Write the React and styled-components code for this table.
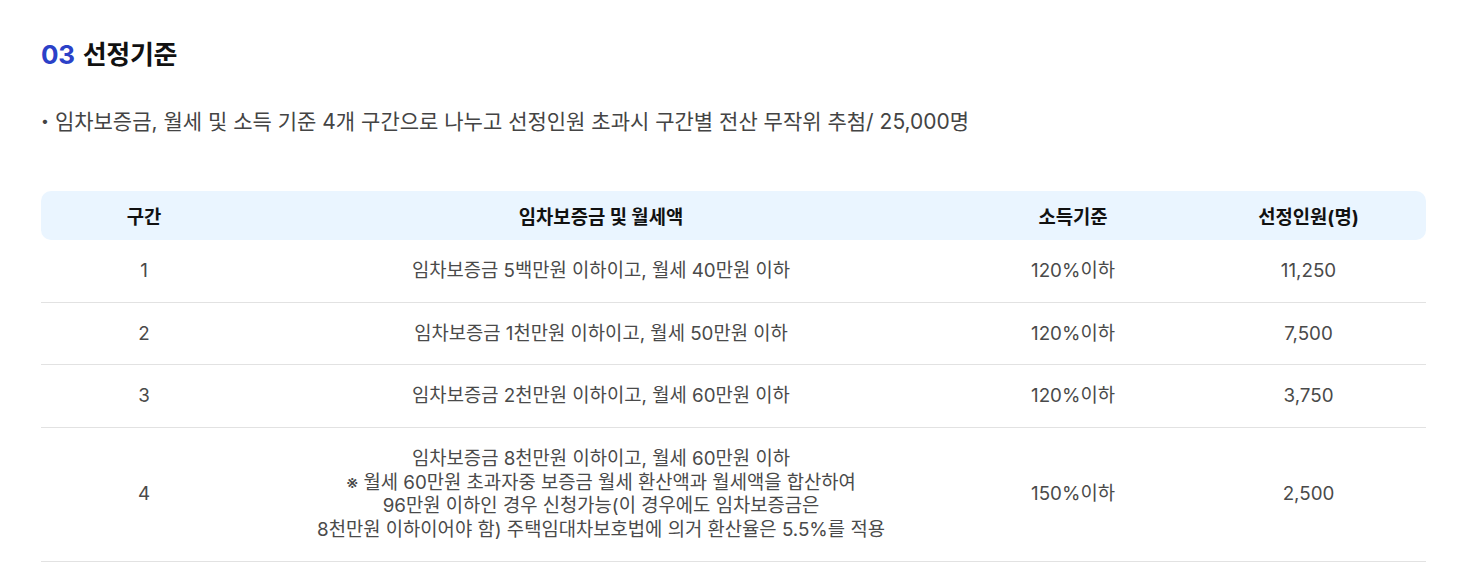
import React from 'react';
import styled, { createGlobalStyle } from 'styled-components';

const GlobalStyle = createGlobalStyle`
  body {
    margin: 0;
    background: #fff;
    font-family: Inter, "Noto Sans CJK KR", sans-serif;
  }
  * { box-sizing: border-box; }
`;

const Section = styled.section`
  padding: 36px 41px 0 41px;
`;

const Title = styled.h2`
  margin: 0;
  font-size: 26px;
  font-weight: 700;
  color: #111;
  line-height: 38px;
  letter-spacing: -0.3px;
  span {
    color: #2b41c8;
    margin-right: 8px;
  }
`;

const Bullet = styled.p`
  margin: 32px 0 0 0;
  font-size: 21px;
  color: #444;
  line-height: 30px;
  &::before {
    content: '•';
    font-size: 14px;
    margin-right: 6px;
    vertical-align: 3px;
  }
`;

const Table = styled.div`
  margin-top: 54px;
  display: grid;
  grid-template-columns: 206px 708px 236px 235px;
  width: 1385px;
`;

const HeadCell = styled.div`
  height: 49px;
  display: flex;
  align-items: center;
  justify-content: center;
  background: #eaf5ff;
  font-size: 18.8px;
  font-weight: 700;
  color: #111;
  border-radius: ${p => (p.$first ? '10px 0 0 10px' : p.$last ? '0 10px 10px 0' : '0')};
`;

const Cell = styled.div`
  min-height: ${p => (p.$tall ? '134px' : '62.5px')};
  display: flex;
  align-items: center;
  justify-content: center;
  text-align: center;
  font-size: 18.8px;
  color: #4a4a4a;
  line-height: 23.5px;
  border-bottom: 1px solid #e2e2e2;
`;

const rows = [
  { no: '1', cond: ['임차보증금 5백만원 이하이고, 월세 40만원 이하'], income: '120%이하', count: '11,250' },
  { no: '2', cond: ['임차보증금 1천만원 이하이고, 월세 50만원 이하'], income: '120%이하', count: '7,500' },
  { no: '3', cond: ['임차보증금 2천만원 이하이고, 월세 60만원 이하'], income: '120%이하', count: '3,750' },
  {
    no: '4',
    cond: [
      '임차보증금 8천만원 이하이고, 월세 60만원 이하',
      '※ 월세 60만원 초과자중 보증금 월세 환산액과 월세액을 합산하여',
      '96만원 이하인 경우 신청가능(이 경우에도 임차보증금은',
      '8천만원 이하이어야 함) 주택임대차보호법에 의거 환산율은 5.5%를 적용',
    ],
    income: '150%이하',
    count: '2,500',
    tall: true,
  },
];

export default function App() {
  return (
    <>
      <GlobalStyle />
      <Section>
        <Title><span>03</span>선정기준</Title>
        <Bullet>임차보증금, 월세 및 소득 기준 4개 구간으로 나누고 선정인원 초과시 구간별 전산 무작위 추첨/ 25,000명</Bullet>
        <Table>
          <HeadCell $first>구간</HeadCell>
          <HeadCell>임차보증금 및 월세액</HeadCell>
          <HeadCell>소득기준</HeadCell>
          <HeadCell $last>선정인원(명)</HeadCell>
          {rows.map(r => (
            <React.Fragment key={r.no}>
              <Cell $tall={r.tall}>{r.no}</Cell>
              <Cell $tall={r.tall}>
                <div>{r.cond.map((l, i) => <div key={i}>{l}</div>)}</div>
              </Cell>
              <Cell $tall={r.tall}>{r.income}</Cell>
              <Cell $tall={r.tall}>{r.count}</Cell>
            </React.Fragment>
          ))}
        </Table>
      </Section>
    </>
  );
}
